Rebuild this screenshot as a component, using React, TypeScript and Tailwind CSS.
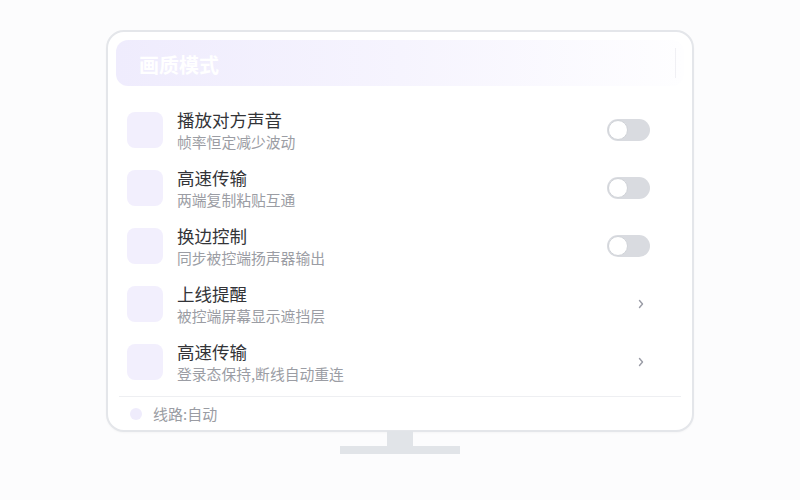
import React from "react";

const rows = [
  { title: "播放对方声音", sub: "帧率恒定减少波动", kind: "toggle" },
  { title: "高速传输", sub: "两端复制粘贴互通", kind: "toggle" },
  { title: "换边控制", sub: "同步被控端扬声器输出", kind: "toggle" },
  { title: "上线提醒", sub: "被控端屏幕显示遮挡层", kind: "chevron" },
  { title: "高速传输", sub: "登录态保持,断线自动重连", kind: "chevron" },
];

function Toggle() {
  return (
    <div className="w-[43px] h-[22px] rounded-full bg-[#d9dbe0] relative">
      <div className="absolute left-[1px] top-[1px] w-[20px] h-[20px] rounded-full bg-white border border-[#d0d3d8]" />
    </div>
  );
}

function Chevron() {
  return (
    <svg width="8" height="10" viewBox="0 0 8 10" className="mr-[5px]">
      <path d="M2.5 1.5 L5.5 5 L2.5 8.5" fill="none" stroke="#9a9ca6" strokeWidth="1.4" strokeLinecap="round" strokeLinejoin="round" />
    </svg>
  );
}

export default function App() {
  return (
    <div
      className="w-[800px] h-[500px] bg-[#fcfcfd] flex flex-col items-center pt-[30px]"
      style={{ fontFamily: '"Noto Sans CJK SC", "Noto Sans", sans-serif' }}
    >
      <div className="w-[588px] h-[402px] border-2 border-[#e4e6ea] rounded-[18px] bg-white px-[8px] pt-[8px] flex flex-col shadow-[0_1px_2px_rgba(0,0,0,0.03)] overflow-hidden">
        <div className="shrink-0 h-[46px] rounded-[12px] bg-gradient-to-r from-[#efecfd] via-[#f6f4fe] to-[#fefeff] flex items-center pl-[23px] pr-[8px]">
          <span className="text-white text-[20px] font-semibold leading-none mt-[3px]">画质模式</span>
          <div className="flex-1" />
          <div className="w-px h-[30px] bg-[#f0f0f4]" />
        </div>
        <div className="shrink-0 flex flex-col mt-[15px]">
          {rows.map((r, i) => (
            <div key={i} className="h-[58px] flex items-center pl-[11px] pr-[34px]">
              <div className="w-[36px] h-[36px] rounded-[8px] bg-[#f2effd]" />
              <div className="ml-[14px] flex flex-col">
                <span className="text-[17.5px] leading-[22px] text-[#333438]">{r.title}</span>
                <span className="text-[14.8px] leading-[18px] mt-[2px] text-[#9b9da4]">{r.sub}</span>
              </div>
              <div className="flex-1" />
              {r.kind === "toggle" ? <Toggle /> : <Chevron />}
            </div>
          ))}
        </div>
        <div className="shrink-0 mx-[3px] mt-[5px] h-px bg-[#eeeff2]" />
        <div className="shrink-0 flex items-center pl-[14px] h-[33px]">
          <div className="w-[12px] h-[12px] rounded-full bg-[#efecfc]" />
          <span className="ml-[11px] text-[15px] text-[#9a9ca3] leading-none">线路:自动</span>
        </div>
      </div>
      <div className="w-[26px] h-[15px] bg-[#e1e4e8] -mt-px" />
      <div className="w-[120px] h-[8px] bg-[#e1e4e8]" />
    </div>
  );
}
